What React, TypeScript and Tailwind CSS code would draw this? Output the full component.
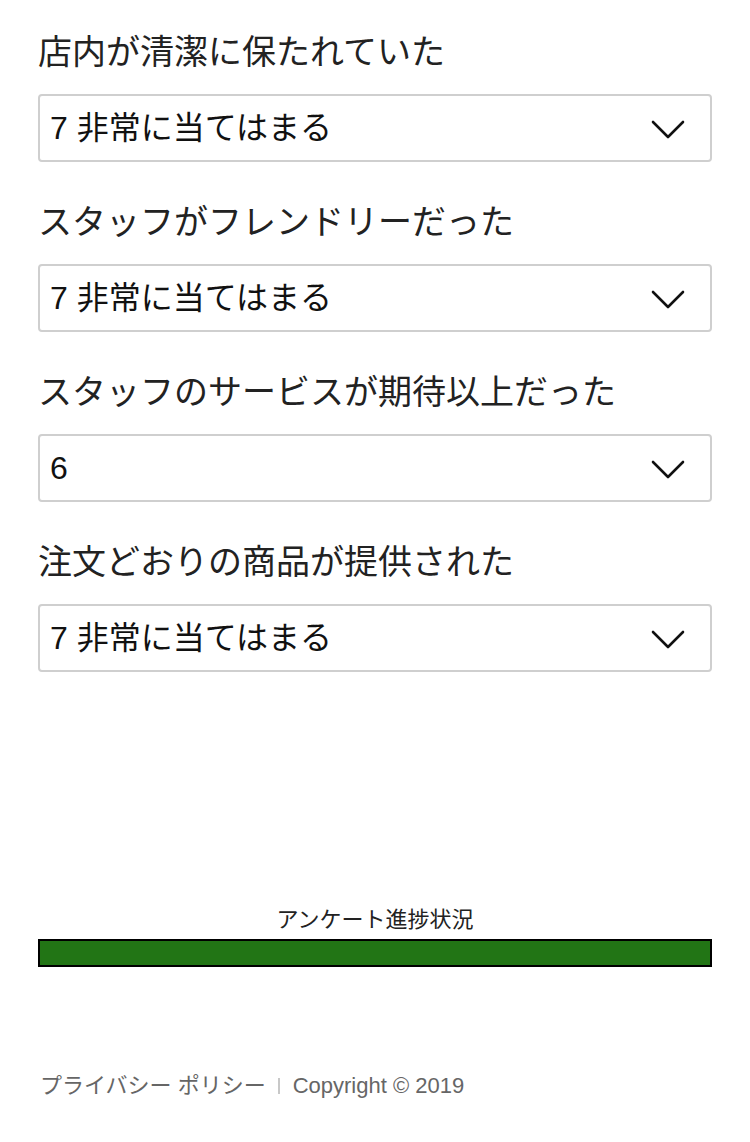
import { useState } from 'react';

const FONT = "font-['Liberation_Sans','Noto_Sans_CJK_JP',sans-serif]";

const OPTIONS = ['1 全く当てはまらない', '2', '3', '4', '5', '6', '7 非常に当てはまる'];

const QUESTIONS = [
  { label: '店内が清潔に保たれていた', value: '7 非常に当てはまる' },
  { label: 'スタッフがフレンドリーだった', value: '7 非常に当てはまる' },
  { label: 'スタッフのサービスが期待以上だった', value: '6' },
  { label: '注文どおりの商品が提供された', value: '7 非常に当てはまる' },
];

function Chevron() {
  return (
    <svg width="34" height="20" viewBox="0 0 34 20" fill="none" className="pointer-events-none absolute right-[27px] top-[26px]">
      <polyline points="2,2 17,17 32,2" stroke="#111" strokeWidth="2.6" strokeLinecap="round" strokeLinejoin="round" />
    </svg>
  );
}

function Question({ label, initial }: { label: string; initial: string }) {
  const [value, setValue] = useState(initial);
  return (
    <div className="mb-[38px]">
      <div className="text-[34px] leading-[44px] text-[#222] mb-[20px]">{label}</div>
      <div className="relative">
        <select
          value={value}
          onChange={(e) => setValue(e.target.value)}
          className={`${FONT} appearance-none w-full h-[68px] rounded-[4px] border-2 border-[#cfcfcf] bg-white pl-[10px] text-[32px] text-[#111] outline-none`}
        >
          {OPTIONS.map((o) => (
            <option key={o} value={o}>{o}</option>
          ))}
        </select>
        <Chevron />
      </div>
    </div>
  );
}

export default function App() {
  return (
    <div className={`${FONT} bg-white min-h-[1142px] w-[750px] px-[38px] pt-[30px]`}>
      {QUESTIONS.map((q) => (
        <Question key={q.label} label={q.label} initial={q.value} />
      ))}

      {/* Progress */}
      <div className="mt-[234px]">
        <div className="text-center text-[22px] leading-[28px] text-[#222] mb-[5px]">アンケート進捗状況</div>
        <div className="h-[28px] border-2 border-black bg-[#227515]" />
      </div>

      {/* Footer */}
      <div className="mt-[102px] flex items-center text-[22px] text-[#666] pl-[2px]">
        <a href="#" className="text-[#666]">プライバシー ポリシー</a>
        <span className="ml-[12px] mr-[13px] w-[2px] h-[16px] bg-[#c8c8c8]" />
        <span>Copyright © 2019</span>
      </div>
    </div>
  );
}
